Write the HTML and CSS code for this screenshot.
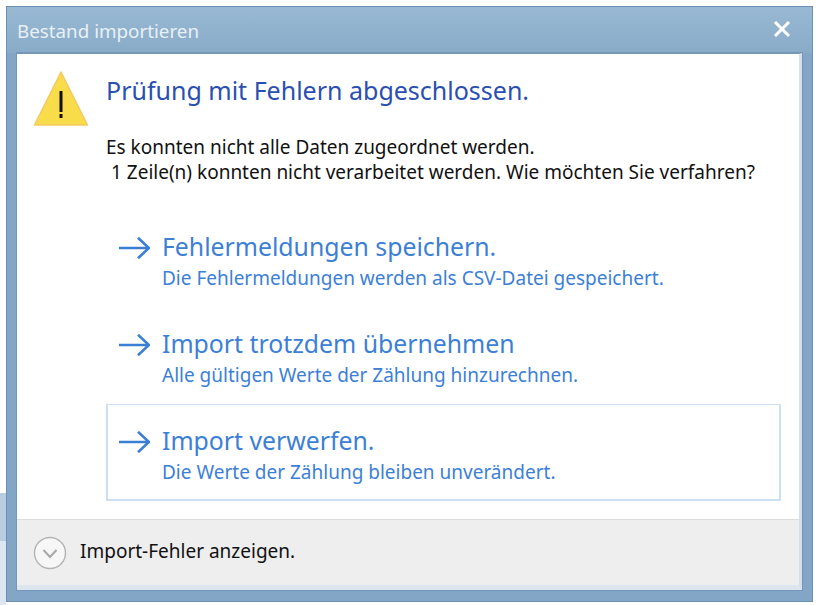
FILE: index.html
```html
<!DOCTYPE html>
<html lang="de">
<head>
    <meta charset="UTF-8">
    <title>Bestand importieren</title>
    <link rel="stylesheet" href="styles.css">
</head>
<body>

    <div class="window">
        <div class="titlebar">
            <span class="title">Bestand importieren</span>
            <svg class="close" width="20" height="20" viewBox="0 0 20 20">
                <path d="M3 3 L17 17 M17 3 L3 17" stroke="#fff" stroke-width="3" fill="none"/>
            </svg>
        </div>
        <div class="client">
            <div class="content">
                <svg class="warning" width="56" height="56" viewBox="0 0 56 56">
                    <path d="M27 1 L53.5 54 L0.5 54 Z" fill="#f9dc4a" stroke="#f5c964" stroke-width="1.5" stroke-linejoin="round"/>
                    <path d="M27 20 L27 41" stroke="#111" stroke-width="3" fill="none"/>
                    <rect x="25.5" y="43" width="3" height="4" fill="#111"/>
                </svg>
                <div class="main">
                    <h1>Prüfung mit Fehlern abgeschlossen.</h1>
                    <p class="message">Es konnten nicht alle Daten zugeordnet werden.</p>
                    <p class="message second">1 Zeile(n) konnten nicht verarbeitet werden. Wie möchten Sie verfahren?</p>

                    <div class="options">
                        <div class="option">
                            <svg class="arrow" width="32" height="22" viewBox="0 0 32 22">
                                <path d="M1 11 L31 11 M20 0.8 L31 11 L20 21.2" stroke="#3a7fd5" stroke-width="2.6" fill="none"/>
                            </svg>
                            <div>
                                <div class="option-title">Fehlermeldungen speichern.</div>
                                <div class="option-text">Die Fehlermeldungen werden als CSV-Datei gespeichert.</div>
                            </div>
                        </div>
                        <div class="option">
                            <svg class="arrow" width="32" height="22" viewBox="0 0 32 22">
                                <path d="M1 11 L31 11 M20 0.8 L31 11 L20 21.2" stroke="#3a7fd5" stroke-width="2.6" fill="none"/>
                            </svg>
                            <div>
                                <div class="option-title">Import trotzdem übernehmen</div>
                                <div class="option-text">Alle gültigen Werte der Zählung hinzurechnen.</div>
                            </div>
                        </div>
                        <div class="option selected">
                            <svg class="arrow" width="32" height="22" viewBox="0 0 32 22">
                                <path d="M1 11 L31 11 M20 0.8 L31 11 L20 21.2" stroke="#3a7fd5" stroke-width="2.6" fill="none"/>
                            </svg>
                            <div>
                                <div class="option-title">Import verwerfen.</div>
                                <div class="option-text">Die Werte der Zählung bleiben unverändert.</div>
                            </div>
                        </div>
                    </div>
                </div>
            </div>
            <div class="footer">
                <svg class="expand" width="34" height="34" viewBox="0 0 34 34">
                    <circle cx="17" cy="17" r="15.5" fill="#f7f7f7" stroke="#b4b4b4" stroke-width="1.4"/>
                    <path d="M10.5 14 L17 21 L23.5 14" stroke="#a8a8a8" stroke-width="2" fill="none"/>
                </svg>
                <span class="footer-text">Import-Fehler anzeigen.</span>
            </div>
        </div>
    </div>

</body>
</html>
```

FILE: styles.css
```css
html, body {
    height: 100%;
}
body {
    font-family: "Noto Sans", Arial, sans-serif;
    background: #fff linear-gradient(#fff 493px, #b9cde0 493px, #b9cde0 541px, #dce6f1 541px) no-repeat;
    background-size: 6px 100%;
    margin: 0;
    padding: 6px 7px 3px 6px;
    box-sizing: border-box;
    overflow: hidden;
}
.window {
    height: 100%;
    box-sizing: border-box;
    background-color: #83a6c6;
    border: 1px solid #6c8fb2;
    padding: 0 10px 11px 10px;
    display: flex;
    flex-direction: column;
}
.titlebar {
    height: 46px;
    flex-shrink: 0;
    display: flex;
    align-items: center;
    justify-content: space-between;
    background: linear-gradient(#99b9d3, #88abc8);
    margin: 0 -10px;
    padding: 0 20px 0 10px;
}
.title {
    font-size: 18.8px;
    color: #e8f0f6;
    margin-top: 1px;
}
.close {
    margin-bottom: 3px;
}
.client {
    flex: 1;
    display: flex;
    flex-direction: column;
    background-color: #fff;
    border-top: 1px solid #7898b8;
    border-right: 3px solid #d5e0ec;
    border-bottom: 5px solid #dde5ee;
    outline: 1px solid #7496b8;
}
.content {
    flex: 1;
    display: flex;
    padding: 17px 18px 0 17px;
}
.warning {
    flex-shrink: 0;
    margin-right: 16px;
}
.main {
    flex: 1;
}
h1 {
    font-size: 25px;
    font-weight: normal;
    color: #2a4fb0;
    margin: 1px 0 27px 0;
    line-height: 36px;
}
.message {
    font-size: 19px;
    color: #111;
    margin: 0;
    line-height: 25px;
}
.second {
    padding-left: 5px;
}
.options {
    margin-top: 25px;
    display: flex;
    flex-direction: column;
    gap: 1px;
}
.option {
    height: 96px;
    box-sizing: border-box;
    border: 1px solid transparent;
    display: flex;
    padding: 17px 0 0 11px;
}
.option.selected {
    height: 97px;
    border: 2px solid #cde0f3;
    border-top-width: 1px;
    padding-left: 10px;
}
.arrow {
    flex-shrink: 0;
    margin: 9px 12px 0 0;
}
.option-title {
    font-size: 24.8px;
    color: #3c80d6;
    line-height: 36px;
}
.option-text {
    font-size: 19px;
    color: #3c80d6;
    line-height: 28px;
}
.footer {
    height: 66px;
    flex-shrink: 0;
    box-sizing: border-box;
    background-color: #eee;
    border-top: 1px solid #ddd;
    display: flex;
    align-items: center;
    padding: 0 0 4px 16px;
    gap: 13px;
    font-size: 19px;
    color: #111;
}
.expand {
    margin-top: 4px;
}
```
